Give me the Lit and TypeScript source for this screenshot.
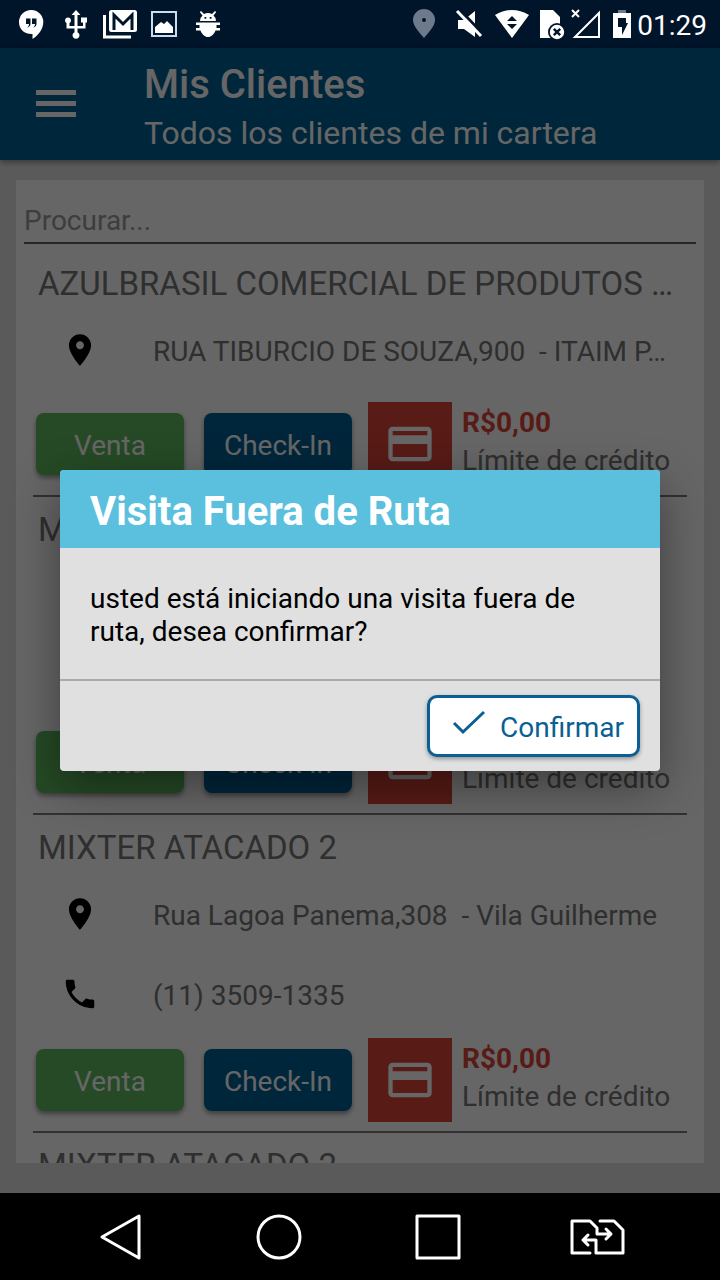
import { LitElement, html, css, nothing } from "lit";
import { customElement, property } from "lit/decorators.js";

interface Client {
  name: string;
  address: string;
  phone?: string;
  credit: string;
}

const CLIENTS: Client[] = [
  { name: "AZULBRASIL COMERCIAL DE PRODUTOS …", address: "RUA TIBURCIO DE SOUZA,900  - ITAIM P…", credit: "R$0,00" },
  { name: "M", address: "", phone: "", credit: "R$0,00" },
  { name: "MIXTER ATACADO 2", address: "Rua Lagoa Panema,308  - Vila Guilherme", phone: "(11) 3509-1335", credit: "R$0,00" },
  { name: "MIXTER ATACADO 2", address: "", phone: "", credit: "R$0,00" },
];

@customElement("status-bar")
export class StatusBar extends LitElement {
  static styles = css`
    :host {
      display: flex;
      justify-content: space-between;
      align-items: center;
      height: 48px;
      padding: 0 13px 0 18px;
      background: #00142a;
      color: #fff;
      font: 28px/32px Roboto, sans-serif;
    }
    .group { display: flex; align-items: center; }
    .left { gap: 13px; }
    .right { gap: 12px; }
    svg { display: block; flex: none; overflow: visible; }
    .time { margin-left: -6px; padding-top: 3px; }
  `;

  render() {
    return html`
      <div class="group left">
        <svg width="31" height="32" viewBox="0 0 31 32" fill="#fff">
          <path fill-rule="evenodd" d="M13 2a12 12 0 0 1 12.300 12C25.300 21.500 19.500 28 14.500 31v-5C6 26.500 1 21 1 14A12 12 0 0 1 13 2zM8 10.500v5.500h3c0 1.500-.5 2.500-1.800 3.500 2.500-.5 3.300-2 3.300-4v-5zM14 10.500v5.500h3c0 1.500-.5 2.500-1.800 3.500 2.500-.5 3.300-2 3.300-4v-5z" />
        </svg>
        <svg width="28" height="32" viewBox="0 0 28 32" fill="#fff">
          <path d="M14 2l4.500 5h-3v11h5.500v-3.500h-2V9.500h6V14.500h-1.500v6h-8v3.700a3.500 3.500 0 1 1-3 0v-3.700H4.500v-5.500a3 3 0 1 1 3 0v3H12.500V7h-3z" />
        </svg>
        <svg width="34" height="32" viewBox="0 0 34 32" fill="none">
          <path d="M1.500 7v22H28" stroke="#fff" stroke-width="3" />
          <rect x="6" y="2" width="28" height="22" rx="2.500" fill="#fff" />
          <path d="M11 22V7l9 9 9-9v15" stroke="#00142a" stroke-width="3" />
        </svg>
        <svg width="32" height="32" viewBox="0 0 32 32">
          <rect x="2" y="4" width="24" height="24" fill="none" stroke="#c9dcf3" stroke-width="2" />
          <path fill="#fff" d="M5 25v-6l6-5 3 2 3-3 6 6v6z" />
        </svg>
        <svg width="26" height="32" viewBox="0 0 26 32" fill="#fff">
          <path fill-rule="evenodd" d="M6 3l3 3q4-2 8 0l3-3 1.200 1-2.700 3.500Q21 9.500 21 13H5q0-3.500 2.500-5.500L4.800 4zM9.500 9v1.800h1.800V9zM14.700 9v1.800h1.800V9z" />
          <path d="M1 14.500h24V17h-3.500v3H25v2.500h-4.500C19 26.500 16 29 13 29s-6-2.500-7.500-6.500H1V20h3.500v-3H1z" />
        </svg>
      </div>
      <div class="group right">
        <svg width="32" height="32" viewBox="0 0 32 32">
          <path fill="#6d7a8b" fill-rule="evenodd" d="M13 1a11 11 0 0 1 11 11c0 6-6 12-11 18C8 24 2 18 2 12A11 11 0 0 1 13 1zm0 9a2 2 0 1 0 0 4 2 2 0 0 0 0-4z" />
        </svg>
        <svg width="28" height="32" viewBox="0 0 28 32">
          <path fill="#fff" d="M3 12h6l11-9v26l-11-8H3z" />
          <path stroke="#00142a" stroke-width="3" d="M4 1l24 25" />
          <path stroke="#fff" stroke-width="3" d="M2 3l24 25" />
        </svg>
        <svg width="33" height="32" viewBox="0 0 33 32">
          <path fill="#fff" d="M0 7Q17-3 34 7L17 30z" />
          <path fill="#00142a" d="M17 8l5 5H12zM17 21l-5-5h10z" />
        </svg>
        <svg width="20" height="32" viewBox="0 0 20 32">
          <path fill="#fff" d="M0 2h13l7 7v21H0z" />
          <circle cx="17" cy="24" r="9" fill="#00142a" />
          <circle cx="17" cy="24" r="7.200" fill="#fff" />
          <path stroke="#00142a" stroke-width="2.400" d="M13.800 20.800l6.400 6.400M20.200 20.800l-6.400 6.400" />
        </svg>
        <svg width="29" height="32" viewBox="0 0 29 32" fill="none" stroke="#fff">
          <path stroke-width="2" d="M27 5v24H3z" />
          <path stroke-width="2" d="M0 2l7 7M7 2L0 9" />
        </svg>
        <svg width="18" height="32" viewBox="0 0 18 32">
          <path fill="#6d7a8b" d="M5 2h8v3H5z" />
          <path fill="#fff" d="M0 5h18v25H0z" />
          <path fill="#00142a" d="M5 10h8v5h2L9 27v-8H5z" />
        </svg>
        <span class="time">01:29</span>
      </div>
    `;
  }
}

@customElement("client-item")
export class ClientItem extends LitElement {
  @property({ attribute: false }) client!: Client;

  static styles = css`
    :host {
      display: block;
      border-bottom: 2px solid #7a7a7a;
    }
    .name {
      margin: 0;
      padding: 6px 5px 0;
      font-size: 33px;
      font-weight: 400;
      line-height: 54px;
      color: #757575;
      white-space: nowrap;
      overflow: hidden;
      text-overflow: ellipsis;
    }
    .contacts { min-height: 88px; }
    .row {
      display: grid;
      grid-template-columns: 94px 1fr;
      column-gap: 26px;
      align-items: center;
      height: 80px;
      color: #757575;
      white-space: pre;
    }
    .row svg { justify-self: center; width: 38px; height: 38px; margin-bottom: 2px; fill: #000; }
    .actions { display: flex; align-items: center; padding: 3px 0 9px 3px; }
    .btn {
      width: 148px;
      height: 62px;
      margin: 0 20px 0 0;
      padding: 2px 0 0;
      border: 0;
      border-radius: 8px;
      color: #fff;
      font: inherit;
      box-shadow: 0 3px 5px rgba(0, 0, 0, 0.4);
    }
    .sale { background: #5cb85c; }
    .checkin { background: #005f94; margin-right: 16px; }
    .card {
      display: grid;
      place-items: center;
      width: 84px;
      height: 84px;
      background: #dc4437;
    }
    .credit { align-self: flex-start; margin-left: 10px; padding-top: 2px; line-height: 38px; color: #757575; white-space: nowrap; }
    .amount { display: block; font-weight: 700; color: #dc4437; }
  `;

  render() {
    const c = this.client;
    return html`
      <h2 class="name">${c.name}</h2>
      <div class="contacts">
        <div class="row">
          <svg viewBox="0 0 24 24"><path d="M12 2C8.130 2 5 5.130 5 9c0 5.250 7 13 7 13s7-7.750 7-13c0-3.870-3.130-7-7-7zm0 9.500c-1.380 0-2.500-1.120-2.500-2.500s1.120-2.500 2.500-2.500 2.500 1.120 2.500 2.500-1.120 2.500-2.500 2.500z" /></svg>
          <span>${c.address}</span>
        </div>
        ${c.phone === undefined ? nothing : html`
          <div class="row">
            <svg viewBox="0 0 24 24"><path d="M6.620 10.790c1.440 2.830 3.760 5.140 6.590 6.590l2.200-2.200c.27-.27.67-.36 1.020-.24 1.120.37 2.330.57 3.570.57.55 0 1 .45 1 1V20c0 .55-.45 1-1 1-9.390 0-17-7.610-17-17 0-.55.45-1 1-1h3.500c.55 0 1 .45 1 1 0 1.250.2 2.450.57 3.570.11.35.03.74-.25 1.020l-2.200 2.200z" /></svg>
            <span>${c.phone}</span>
          </div>`}
      </div>
      <div class="actions">
        <button class="btn sale" type="button">Venta</button>
        <button class="btn checkin" type="button">Check-In</button>
        <div class="card">
          <svg width="52" height="52" viewBox="0 0 24 24" fill="#fff"><path d="M20 4H4c-1.110 0-1.990.89-1.990 2L2 18c0 1.110.89 2 2 2h16c1.110 0 2-.89 2-2V6c0-1.110-.89-2-2-2zm0 14H4v-6h16v6zm0-10H4V6h16v2z" /></svg>
        </div>
        <div class="credit"><strong class="amount">${c.credit}</strong>Límite de crédito</div>
      </div>
    `;
  }
}

@customElement("app-root")
export class AppRoot extends LitElement {
  static styles = css`
    :host {
      display: flex;
      flex-direction: column;
      height: 100vh;
      overflow: hidden;
      font: 28px/33px Roboto, sans-serif;
    }
    .app {
      position: relative;
      flex: 1;
      min-height: 0;
      display: flex;
      flex-direction: column;
      background: #e1e1e1;
    }
    .bar {
      box-sizing: border-box;
      display: flex;
      align-items: center;
      height: 112px;
      flex: none;
      padding-left: 36px;
      background: #005f94;
      color: #fff;
      box-shadow: 0 2px 6px rgba(0, 0, 0, 0.4);
    }
    .menu { width: 40px; height: 40px; margin-right: 68px; padding: 0; border: 0; background: none; }
    .menu svg { display: block; }
    .heading { padding-top: 8px; }
    .heading h1 { margin: 0; font-size: 40px; font-weight: 500; line-height: 50px; }
    .heading p { margin: 0; font-size: 32px; line-height: 46px; }
    .panel {
      flex: 1;
      min-height: 0;
      margin: 20px 16px 30px;
      padding: 0 8px;
      background: #fff;
      overflow: hidden;
    }
    .search {
      display: block;
      box-sizing: border-box;
      width: 100%;
      height: 64px;
      padding: 18px 0 0;
      border: 0;
      border-bottom: 2px solid #5f5f5f;
      border-radius: 0;
      background: none;
      font: inherit;
      outline: none;
    }
    .search::placeholder { color: #9a9a9a; opacity: 1; }
    .list { margin: 7px 9px 0; }
    .scrim {
      position: absolute;
      inset: 0;
      display: flex;
      align-items: center;
      justify-content: center;
      padding: 0 60px;
      background: rgba(0, 0, 0, 0.6);
    }
    .dialog {
      flex: 1;
      border-radius: 4px;
      overflow: hidden;
      background: #e0e0e0;
      color: #000;
      box-shadow: 0 16px 48px rgba(0, 0, 0, 0.4);
    }
    .dialog h2 {
      margin: 0;
      padding: 6px 30px 0;
      background: #5bc0de;
      color: #fff;
      font-size: 40px;
      font-weight: 700;
      line-height: 72px;
    }
    .dialog p { margin: 0; padding: 34px 30px 31px; }
    .foot { display: flex; justify-content: flex-end; padding: 14px 20px; border-top: 2px solid #aaa; }
    .confirm {
      display: flex;
      align-items: center;
      gap: 14px;
      height: 62px;
      padding: 2px 13px 0 22px;
      border: 3px solid #0b5f94;
      border-radius: 10px;
      background: #fff;
      color: #0b5f94;
      font: inherit;
      box-shadow: 0 2px 4px rgba(0, 0, 0, 0.35);
    }
    .confirm svg { margin-bottom: 8px; }
    .nav {
      display: grid;
      grid-template-columns: repeat(4, 1fr);
      height: 87px;
      flex: none;
      box-sizing: border-box;
      padding: 0 43px 0 41px;
      background: #000;
    }
    .nav button { display: grid; place-items: center; padding: 0; border: 0; background: none; }
    .nav svg { fill: none; stroke: #fff; stroke-width: 3; stroke-linejoin: round; stroke-linecap: round; }
  `;

  render() {
    return html`
      <status-bar></status-bar>
      <div class="app">
        <header class="bar">
          <button class="menu" type="button" aria-label="Menú">
            <svg width="40" height="40" viewBox="0 0 40 40" fill="#fff"><path d="M0 6h40v5H0zM0 17h40v5H0zM0 28h40v5H0z" /></svg>
          </button>
          <div class="heading">
            <h1>Mis Clientes</h1>
            <p>Todos los clientes de mi cartera</p>
          </div>
        </header>
        <main class="panel">
          <input class="search" type="text" placeholder="Procurar..." aria-label="Procurar" />
          <div class="list">
            ${CLIENTS.map((c) => html`<client-item .client=${c}></client-item>`)}
          </div>
        </main>
        <div class="scrim">
          <section class="dialog" role="dialog" aria-labelledby="title">
            <h2 id="title">Visita Fuera de Ruta</h2>
            <p>usted está iniciando una visita fuera de ruta, desea confirmar?</p>
            <div class="foot">
              <button class="confirm" type="button">
                <svg width="34" height="26" viewBox="0 0 34 26" fill="none" stroke="#0b5f94" stroke-width="3"><path d="M2 13l9 9L32 2" /></svg>
                Confirmar
              </button>
            </div>
          </section>
        </div>
      </div>
      <nav class="nav">
        <button type="button" aria-label="Atrás"><svg width="56" height="48" viewBox="0 0 56 48"><path d="M46 3v42L9 24z" /></svg></button>
        <button type="button" aria-label="Inicio"><svg width="56" height="48" viewBox="0 0 56 48"><circle cx="27" cy="24" r="21" /></svg></button>
        <button type="button" aria-label="Recientes"><svg width="56" height="48" viewBox="0 0 56 48"><path d="M6 3h42v42H6z" /></svg></button>
        <button type="button" aria-label="Cambiar SIM"><svg width="56" height="48" viewBox="0 0 56 48"><path d="M20 40H2V8h18l7 7v6h13M36 16l5 5-5 5M30 8h14l9 9v23H26V27H13M18 22l-5 5 5 5" /></svg></button>
      </nav>
    `;
  }
}
